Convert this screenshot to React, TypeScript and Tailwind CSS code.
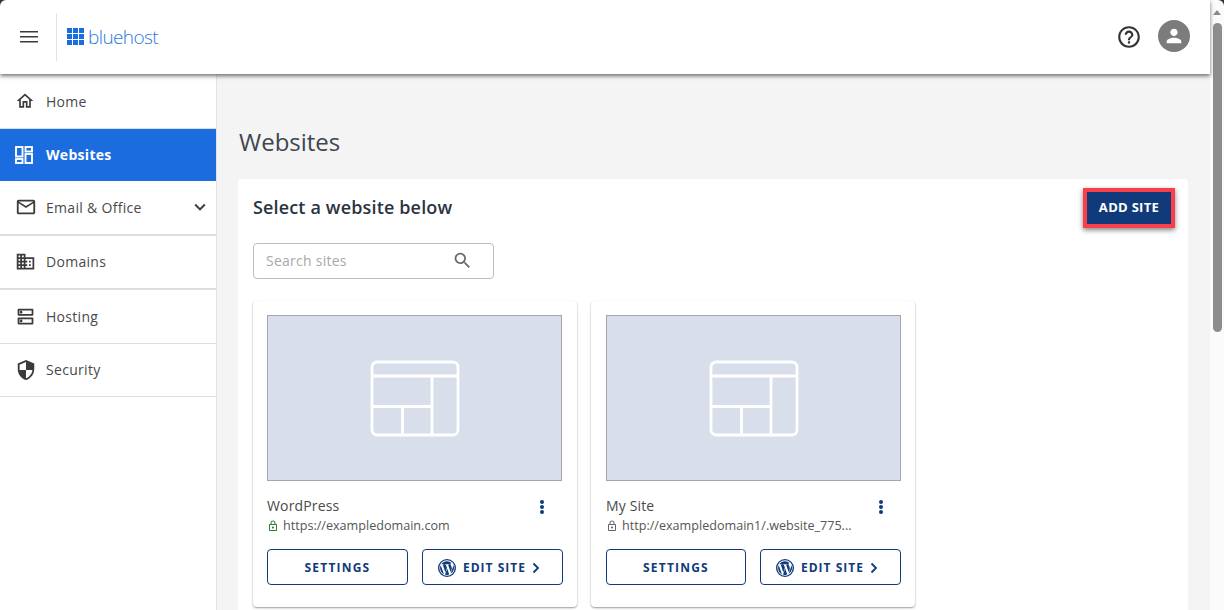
import React from "react";

const navy = "#103a7a";

function HomeIcon() {
  return (
    <svg width="20" height="20" viewBox="0 0 24 24" fill="#3b3b3b">
      <path d="M12 5.69l5 4.5V18h-2v-6H9v6H7v-7.81l5-4.5M12 3L2 12h3v8h6v-6h2v6h6v-8h3L12 3z" />
    </svg>
  );
}
function WebIcon() {
  return (
    <svg width="18" height="18" viewBox="0 0 18 18" fill="none" stroke="#fff" strokeWidth="1.9">
      <rect x="1" y="1" width="6.5" height="9.5" />
      <rect x="10.5" y="1" width="6.5" height="4.5" />
      <rect x="1" y="13" width="6.5" height="4" />
      <rect x="10.5" y="8" width="6.5" height="9" />
    </svg>
  );
}
function MailIcon() {
  return (
    <svg width="22" height="22" viewBox="0 0 24 24" fill="#3b3b3b">
      <path d="M22 6c0-1.1-.9-2-2-2H4c-1.1 0-2 .9-2 2v12c0 1.1.9 2 2 2h16c1.100 0 2-.9 2-2V6zm-2 0l-8 5-8-5h16zm0 12H4V8l8 5 8-5v10z" />
    </svg>
  );
}
function DomainIcon() {
  return (
    <svg width="21" height="21" viewBox="0 0 24 24" fill="#3b3b3b">
      <path d="M12 7V3H2v18h20V7H12zM6 19H4v-2h2v2zm0-4H4v-2h2v2zm0-4H4V9h2v2zm0-4H4V5h2v2zm4 12H8v-2h2v2zm0-4H8v-2h2v2zm0-4H8V9h2v2zm0-4H8V5h2v2zm10 12h-8v-2h2v-2h-2v-2h2v-2h-2V9h8v10zm-2-8h-2v2h2v-2zm0 4h-2v2h2v-2z" />
    </svg>
  );
}
function HostIcon() {
  return (
    <svg width="21" height="21" viewBox="0 0 24 24" fill="#3b3b3b">
      <path d="M19 15v4H5v-4h14m1-2H4c-.55 0-1 .45-1 1v6c0 .55.45 1 1 1h16c.55 0 1-.45 1-1v-6c0-.55-.45-1-1-1zM7 18.500c-.82 0-1.500-.67-1.500-1.500s.68-1.500 1.500-1.500 1.500.67 1.500 1.500-.67 1.500-1.500 1.500zM19 5v4H5V5h14m1-2H4c-.55 0-1 .45-1 1v6c0 .55.45 1 1 1h16c.55 0 1-.45 1-1V4c0-.55-.45-1-1-1zM7 8.500c-.82 0-1.500-.67-1.500-1.500S6.180 5.500 7 5.500s1.500.68 1.500 1.500S7.830 8.500 7 8.500z" />
    </svg>
  );
}
function ShieldIcon() {
  return (
    <svg width="22" height="22" viewBox="0 0 24 24" fill="#3b3b3b">
      <path d="M12 1L3 5v6c0 5.550 3.840 10.740 9 12 5.160-1.260 9-6.450 9-12V5l-9-4zm0 10.990h7c-.53 4.120-3.280 7.790-7 8.940V12H5V6.300l7-3.110v8.800z" />
    </svg>
  );
}
function Chevron() {
  return (
    <svg width="22" height="22" viewBox="0 0 24 24" fill="#3b3b3b">
      <path d="M16.590 8.590L12 13.170 7.410 8.590 6 10l6 6 6-6z" />
    </svg>
  );
}
function Lock({ color }: { color: string }) {
  return (
    <svg width="12" height="12" viewBox="0 0 24 24" fill={color} className="shrink-0">
      <path d="M18 8h-1V6c0-2.760-2.240-5-5-5S7 3.240 7 6v2H6c-1.100 0-2 .9-2 2v10c0 1.100.9 2 2 2h12c1.100 0 2-.9 2-2V10c0-1.100-.9-2-2-2zM9 6c0-1.660 1.340-3 3-3s3 1.340 3 3v2H9V6zm9 14H6V10h12v10zm-6-3c1.100 0 2-.9 2-2s-.9-2-2-2-2 .9-2 2 .9 2 2 2z" />
    </svg>
  );
}
function WpIcon() {
  return (
    <svg width="18" height="18" viewBox="0 0 24 24" className="shrink-0">
      <circle cx="12" cy="12" r="12" fill={navy} />
      <circle cx="12" cy="12" r="10.200" fill="#fff" />
      <path
        fill={navy}
        d="M2.800 12c0 3.600 2.100 6.800 5.200 8.300L3.600 8.300A9.200 9.200 0 0 0 2.800 12zm15.400-.5c0-1.100-.4-1.900-.8-2.500-.5-.8-.9-1.400-.9-2.200 0-.8.600-1.600 1.500-1.600h.1A9.200 9.200 0 0 0 4.300 7h.6c1 0 2.500-.1 2.500-.1.500 0 .6.700.1.800 0 0-.5.100-1.100.1l3.400 10.200 2.100-6.200-1.500-4c-.5 0-1-.1-1-.1-.5 0-.4-.8.100-.8 0 0 1.500.1 2.500.1s2.500-.1 2.500-.1c.5 0 .6.700.1.800 0 0-.5.100-1.100.1l3.400 10 .9-3.100c.4-1.200.7-2.100.7-2.800zM12.200 12.800l-2.800 8.100a9.200 9.200 0 0 0 5.700-.1l-.1-.1-2.800-7.900zm8-5.300l.1.900c0 .9-.2 2-.7 3.300l-2.800 8.100A9.200 9.200 0 0 0 20.200 7.500z"
      />
    </svg>
  );
}
function Placeholder() {
  return (
    <svg width="90" height="77" viewBox="0 0 90 77" fill="none" stroke="#fff" strokeWidth="2.800">
      <rect x="2" y="2" width="86" height="73" rx="5" />
      <path d="M2 16h86M62 16V75M2 46.500h60M32.500 46.500V75" />
    </svg>
  );
}

function NavItem({
  icon,
  label,
  h,
  active,
  chevron,
  border = "border-b border-[#dedede]",
}: {
  icon: React.ReactNode;
  label: string;
  h: string;
  active?: boolean;
  chevron?: boolean;
  border?: string;
}) {
  return (
    <div
      className={`flex items-center pl-[15px] pr-[5px] ${h} ${border} ${
        active ? "bg-[#1b6ddf] text-white font-bold" : "text-[#4a4a4a]"
      }`}
    >
      <span className="w-[31px] flex items-center">{icon}</span>
      <span className="flex-1 text-[14px] tracking-[0.3px]">{label}</span>
      {chevron && <Chevron />}
    </div>
  );
}

function SiteCard({
  name,
  url,
  lockColor,
  pad,
  settingsW,
}: {
  name: string;
  url: string;
  lockColor: string;
  pad: string;
  settingsW: string;
}) {
  return (
    <div className={`w-[324px] h-[306px] bg-white rounded-[4px] ${pad} pt-[14px] shadow-[0_1px_2px_rgba(0,0,0,0.4)]`}>
      <div className="w-[295px] h-[166px] bg-[#d8dfea] border border-[#a3a6ab] flex items-center justify-center">
        <Placeholder />
      </div>
      <div className="flex justify-between mt-[15px] w-[295px]">
        <div>
          <div className="text-[14px] leading-[20px] text-[#4a4a4a] tracking-[0.15px]">{name}</div>
          <div className="flex items-center gap-[4px] h-[20px] text-[#555] text-[12.600px]">
            <Lock color={lockColor} />
            <span>{url}</span>
          </div>
        </div>
        <div className="flex flex-col gap-[1px] items-center pt-[4px] pr-[18px]">
          <span className="w-[4px] h-[4px] rounded-full bg-[#103a7a]" />
          <span className="w-[4px] h-[4px] rounded-full bg-[#103a7a]" />
          <span className="w-[4px] h-[4px] rounded-full bg-[#103a7a]" />
        </div>
      </div>
      <div className="flex gap-[14px] mt-[13px]">
        <button className={`${settingsW} h-[36px] pt-[1px] border border-[#103a7a] rounded-[4px] text-[12px] font-bold text-[#103a7a] tracking-[1.2px]`}>
          SETTINGS
        </button>
        <button className="w-[141px] h-[36px] pt-[1px] pl-[15px] border border-[#103a7a] rounded-[4px] text-[12px] font-bold text-[#103a7a] tracking-[1px] flex items-center gap-[7px]">
          <WpIcon />
          <span>EDIT SITE</span>
          <svg width="8" height="12" viewBox="0 0 8 12" fill="none" stroke="#103a7a" strokeWidth="1.800" className="-ml-[1px]">
            <path d="M1.500 1.500L6 6l-4.500 4.500" />
          </svg>
        </button>
      </div>
    </div>
  );
}

export default function App() {
  return (
    <div
      className="relative flex h-[610px] w-full overflow-hidden bg-white"
      style={{ fontFamily: '"Open Sans", "Noto Sans", sans-serif' }}
    >
      <div className="flex flex-col w-[1210px] h-full">
        <header className="relative z-10 h-[74px] shrink-0 bg-white flex items-center shadow-[0_2px_4px_rgba(0,0,0,0.55)]">
          <div className="w-[57px] h-[48px] flex items-center pl-[20px] border-r border-[#e2e2e2]">
            <svg width="18" height="12" viewBox="0 0 18 12" fill="#3a3a3a">
              <rect width="18" height="1.500" />
              <rect y="5" width="18" height="1.500" />
              <rect y="10" width="18" height="1.500" />
            </svg>
          </div>
          <div className="flex items-center ml-[10px] gap-[4px] flex-1">
            <div className="grid grid-cols-3 gap-[1px] w-[17px] h-[17px] mb-[1px]">
              {Array.from({ length: 9 }).map((_, i) => (
                <span key={i} className="bg-[#1b6ddf]" />
              ))}
            </div>
            <span className="text-[19px] leading-none font-light text-[#2b78dc] tracking-[-0.6px] pt-[1px]">
              bluehost
            </span>
          </div>
          <svg width="26" height="26" viewBox="0 0 24 24" fill="#333" className="mr-[16px] mb-[1px]">
            <path d="M11 18h2v-2h-2v2zm1-16C6.480 2 2 6.480 2 12s4.480 10 10 10 10-4.480 10-10S17.520 2 12 2zm0 18c-4.410 0-8-3.590-8-8s3.590-8 8-8 8 3.590 8 8-3.590 8-8 8zm0-14c-2.210 0-4 1.790-4 4h2c0-1.100.9-2 2-2s2 .9 2 2c0 2-3 1.750-3 5h2c0-2.250 3-2.500 3-5 0-2.210-1.790-4-4-4z" />
          </svg>
          <div className="w-[32px] h-[32px] rounded-full bg-[#7c7c7c] flex items-center justify-center mr-[20px] mb-[2px]">
            <svg width="22" height="22" viewBox="0 0 24 24" fill="#fff">
              <path d="M12 12c2.210 0 4-1.790 4-4s-1.790-4-4-4-4 1.790-4 4 1.790 4 4 4zm0 2c-2.670 0-8 1.340-8 4v2h16v-2c0-2.660-5.330-4-8-4z" />
            </svg>
          </div>
        </header>
        <div className="flex flex-1 min-h-0">
          <aside className="w-[217px] shrink-0 bg-white border-r border-[#e4e4e4]">
            <NavItem icon={<HomeIcon />} label="Home" h="h-[55px]" />
            <NavItem icon={<WebIcon />} label="Websites" h="h-[52px] pb-[1px]" active border="" />
            <NavItem icon={<MailIcon />} label="Email & Office" h="h-[55px] pb-[1px]" chevron border="border-b-2 border-[#dedede]" />
            <NavItem icon={<DomainIcon />} label="Domains" h="h-[54px] pb-[1px]" border="border-b-2 border-[#dedede]" />
            <NavItem icon={<HostIcon />} label="Hosting" h="h-[54px]" />
            <NavItem icon={<ShieldIcon />} label="Security" h="h-[53px] pb-[1px]" />
          </aside>
          <main className="flex-1 bg-[#f4f4f4] pl-[21px] pr-[22px] pt-[52px] min-w-0 overflow-hidden">
            <h1 className="text-[24px] leading-[32px] text-[#3f444e] mb-[21px] ml-[1px]">Websites</h1>
            <section className="bg-white rounded-[4px] h-[600px] px-[15px] pt-[9px]">
              <div className="flex items-center justify-between h-[40px] -mr-[2px]">
                <h2 className="text-[18px] font-semibold text-[#2b3340] pb-[2px] tracking-[0.15px]">Select a website below</h2>
                <button className="w-[92px] h-[40px] bg-[#103a7a] border-[4px] border-[#f9404a] text-white text-[13px] font-bold tracking-[0.3px] shadow-[0_2px_5px_rgba(0,0,0,0.5)]">
                  ADD SITE
                </button>
              </div>
              <div className="w-[241px] h-[36px] mt-[15px] border border-[#bdbdbd] rounded-[4px] flex items-center justify-between pl-[12px] pr-[20px] pb-[1px]">
                <span className="text-[14px] text-[#a8a8a8] tracking-[0.25px]">Search sites</span>
                <svg width="21" height="21" viewBox="0 0 24 24" fill="#6b6b6b">
                  <path d="M15.500 14h-.79l-.28-.27C15.410 12.590 16 11.110 16 9.500 16 5.910 13.090 3 9.500 3S3 5.910 3 9.500 5.910 16 9.500 16c1.610 0 3.090-.59 4.230-1.570l.27.28v.79l5 4.990L20.490 19l-4.990-5zm-6 0C7.010 14 5 11.990 5 9.500S7.010 5 9.500 5 14 7.010 14 9.500 11.990 14 9.500 14z" />
                </svg>
              </div>
              <div className="flex gap-[14px] mt-[22px]">
                <SiteCard name="WordPress" url="https://exampledomain.com" lockColor="#2e7d32" pad="px-[14px]" settingsW="w-[141px]" />
                <SiteCard name="My Site" url="http://exampledomain1/.website_775..." lockColor="#666" pad="pl-[15px] pr-[13px]" settingsW="w-[140px]" />
              </div>
            </section>
          </main>
        </div>
      </div>
      <div className="w-[14px] shrink-0 bg-[#fbfbfb] flex flex-col items-center">
        <div className="h-[23px] flex items-center justify-center pt-[2px]">
          <div className="w-0 h-0 border-l-[4.500px] border-r-[4.500px] border-b-[5px] border-l-transparent border-r-transparent border-b-[#8a8a8a]" />
        </div>
        <div className="w-[9px] h-[309px] bg-[#8d8d8d] rounded-full ml-[1px]" />
      </div>
      <svg width="6" height="6" viewBox="0 0 6 6" className="absolute z-20 top-0 left-0" fill="#333">
        <path d="M0 0h6A6 6 0 0 0 0 6z" />
      </svg>
      <svg width="6" height="6" viewBox="0 0 6 6" className="absolute z-20 top-0 right-0" fill="#333">
        <path d="M6 0H0a6 6 0 0 1 6 6z" />
      </svg>
    </div>
  );
}
